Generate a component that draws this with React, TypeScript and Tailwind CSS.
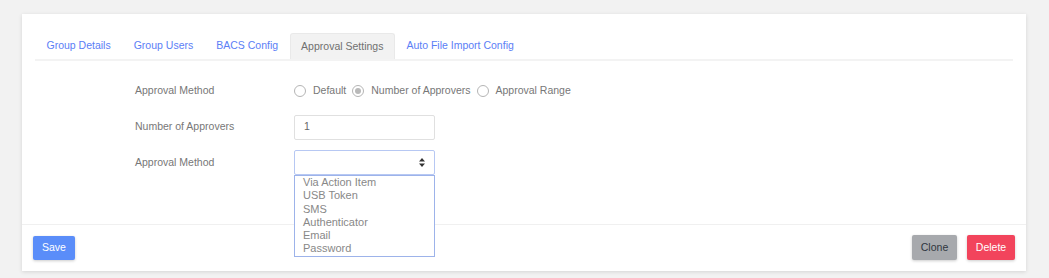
import React from 'react';

const tabs = ['Group Details', 'Group Users', 'BACS Config', 'Approval Settings', 'Auto File Import Config'];
const methods = ['Via Action Item', 'USB Token', 'SMS', 'Authenticator', 'Email', 'Password'];

const Radio: React.FC<{ label: string; checked?: boolean }> = ({ label, checked }) => (
    <label className="flex items-center gap-[7px]">
        <span className="w-[12px] h-[12px] rounded-full border border-[#b5b5b5] bg-white flex items-center justify-center">
            {checked && <span className="w-[6px] h-[6px] rounded-full bg-[#b9b9b9]" />}
        </span>
        <span>{label}</span>
    </label>
);

export default function App() {
    return (
        <div className="min-h-[278px] bg-[#f2f2f2] pt-[14px] pl-[22px] font-['Liberation_Sans',Arial,sans-serif] text-[10.5px] text-[#777]">
            <div className="w-[1004px] bg-white shadow-[0_1px_4px_rgba(0,0,0,0.12)]">
                <div className="h-[210px] px-[13px] pt-[19px]">
                    <div className="flex h-[28px] border-b-2 border-[#f3f3f3]">
                        {tabs.map(t => (
                            <div
                                key={t}
                                className={`flex items-center ${
                                    t === 'Approval Settings'
                                        ? 'px-[10.5px] bg-[#f2f2f2] border border-b-0 border-[#e9e9e9] rounded-t-[3px] text-[#707070]'
                                        : 'px-[11.5px] text-[#5b7ef6]'
                                }`}
                            >
                                {t}
                            </div>
                        ))}
                    </div>

                    <div className="mt-[17px] ml-[100px] flex flex-col gap-[10.5px]">
                        <div className="flex items-center h-[26px]">
                            <div className="w-[159px]">Approval Method</div>
                            <div className="flex items-center gap-[6px]">
                                <Radio label="Default" />
                                <Radio label="Number of Approvers" checked />
                                <Radio label="Approval Range" />
                            </div>
                        </div>
                        <div className="flex items-center h-[25px]">
                            <div className="w-[159px]">Number of Approvers</div>
                            <div className="w-[141px] h-[25px] border border-[#e0e0e0] rounded-[2px] flex items-center px-[9px] text-[#666]">1</div>
                        </div>
                        <div className="flex items-center h-[25px]">
                            <div className="w-[159px]">Approval Method</div>
                            <div className="relative">
                                <div className="w-[141px] h-[25px] border border-[#b7c8f3] rounded-[2px] flex items-center justify-end pr-[9px]">
                                    <svg width="6" height="9" viewBox="0 0 6 9">
                                        <path d="M0 3.5 L3 0 L6 3.5 Z M0 5.5 L3 9 L6 5.5 Z" fill="#333" />
                                    </svg>
                                </div>
                                <div className="absolute left-0 top-[25px] w-[141px] h-[82px] border border-[#9db3ea] bg-white pl-[8px] text-[11px] leading-[13.3px] text-[#888] z-10">
                                    {methods.map(m => (
                                        <div key={m}>{m}</div>
                                    ))}
                                </div>
                            </div>
                        </div>
                    </div>
                </div>

                <div className="border-t border-[#f0f0f0] px-[11px] pt-[10px] pb-[11px] flex items-center justify-between">
                    <button className="h-[24px] px-[9px] rounded-[2px] bg-[#5a8df9] text-white shadow-[0_1px_3px_rgba(0,0,0,0.2)]">Save</button>
                    <div className="flex gap-[10px]">
                        <button className="h-[25px] w-[45px] rounded-[2px] bg-[#a7a9ad] text-[#2f3640] shadow-[0_1px_3px_rgba(0,0,0,0.2)]">Clone</button>
                        <button className="h-[25px] w-[48px] rounded-[2px] bg-[#f2445c] text-white shadow-[0_1px_3px_rgba(0,0,0,0.2)]">Delete</button>
                    </div>
                </div>
            </div>
        </div>
    );
}
